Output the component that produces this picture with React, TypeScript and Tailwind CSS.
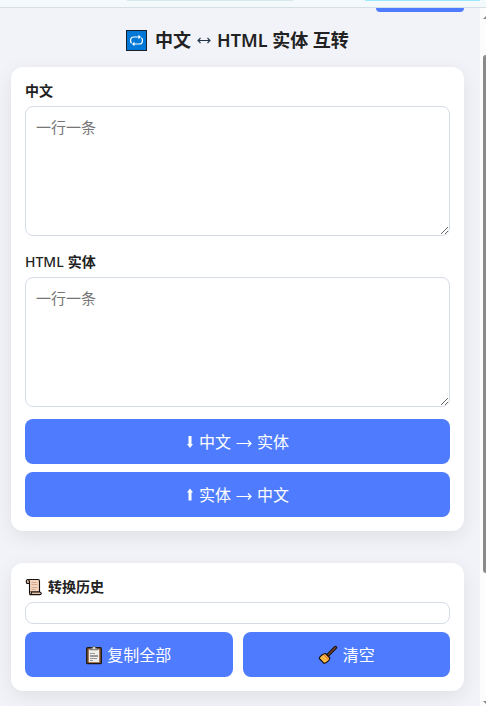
import React from "react";

const BUTTON =
  "flex h-[45px] w-full items-center justify-center gap-[5px] rounded-lg bg-[#4f7cff] text-base text-white";
const FIELD =
  "block h-[130px] w-full resize rounded-lg border border-[#d6dbe8] bg-white p-2.5 text-[15px] leading-5 placeholder:text-[#757575]";
const LABEL = "mb-[5px] flex h-5 items-center text-sm leading-5 font-semibold";
const CARD =
  "rounded-xl bg-white p-3.5 shadow-[0_6px_20px_rgba(0,0,0,0.08)]";

function RepeatIcon() {
  return (
    <svg className="h-[21px] w-[21px]" viewBox="0 0 21 21" aria-hidden="true">
      <rect width="21" height="21" fill="#16202a" />
      <rect x="1" y="1" width="19" height="19" fill="#0078d7" />
      <g fill="none" stroke="#fff" strokeWidth="1.2">
        <path d="M5.600 13.200C3.800 11.500 4.200 7 7.500 7h6" />
        <path d="M15.400 7.800C17.200 9.500 16.800 14 13.500 14h-6" />
      </g>
      <path d="M12.500 4.800 15 7l-2.500 2.200ZM8.500 11.800 6 14l2.500 2.200Z" fill="#fff" />
    </svg>
  );
}

function SwapArrow() {
  return (
    <svg className="h-[18px] w-[14px]" viewBox="0 0 14 18" fill="none" stroke="#1f3448" strokeWidth="1.100" aria-hidden="true">
      <path d="M1 9.500h12M3.500 7l-2.500 2.500 2.500 2.500M10.500 7l2.500 2.500-2.500 2.500" />
    </svg>
  );
}

function BlockArrow({ up = false }: { up?: boolean }) {
  return (
    <svg className="h-4 w-2" viewBox="0 0 8 16" fill="#fff" aria-hidden="true">
      {up ? (
        <path d="M4 1.500 7 5.500H5.500v8h-3v-8H1Z" />
      ) : (
        <path d="M4 14 7 10H5.500V2h-3v8H1Z" />
      )}
    </svg>
  );
}

function RightArrow() {
  return (
    <svg className="h-4 w-4" viewBox="0 0 16 16" fill="none" stroke="#fff" strokeWidth="1.200" aria-hidden="true">
      <path d="M0.500 9.500h14.500M12 6.500l3 3-3 3" />
    </svg>
  );
}

function ScrollIcon() {
  return (
    <svg className="h-[18px] w-[18px]" viewBox="0 0 18 18" aria-hidden="true">
      <g stroke="#17120f" strokeWidth="1.100" strokeLinejoin="round">
        <path d="M3 1.500H13c1 0 1.500.7 1.500 1.700V14H4.500V6z" fill="#f5d5bf" />
        <path d="M4.500 5.500H2.500C.9 5.500.9 1.500 2.500 1.500s2 1.300 2 3z" fill="#d9b59e" />
        <path d="M14.500 14H6.500v1c0 1-.6 1.600-1.500 1.600h10c1.700 0 1.700-2.600-.5-2.600Z" fill="#e6bfa7" />
        <path d="M4.500 13v2.300c0 1.700 2 1.700 2 0" fill="#d9b59e" />
      </g>
      <path d="M6.500 4.500h5M6.500 6.500h6M6.500 9.500h6M6.500 11.500h4" stroke="#d6ab92" />
    </svg>
  );
}

function ClipboardIcon() {
  return (
    <svg className="h-5 w-4" viewBox="0 0 16 20" aria-hidden="true">
      <rect x="0.700" y="2.700" width="14.600" height="16" rx="1" fill="#8f5a32" stroke="#1b1714" strokeWidth="1.300" />
      <path d="M2.800 4.500h10.400v12.700H2.800Z" fill="#f1efec" />
      <path d="M4.500 4.800V3.200h2C6.500.7 9.500.7 9.500 3.200h2v1.600Z" fill="#d7d7d7" stroke="#5b5550" strokeWidth="0.800" />
      <path d="M4 8.500h5M4 15.500h3M4 13.500h7" stroke="#999" />
      <path d="M4 11h8" stroke="#999" strokeWidth="2" />
    </svg>
  );
}

function BroomIcon() {
  return (
    <svg className="h-5 w-5" viewBox="0 0 20 20" aria-hidden="true">
      <path d="m9.500 10.500 8-8" stroke="#16110e" strokeWidth="3.400" strokeLinecap="round" />
      <path d="m9.500 10.500 8-8" stroke="#7b431f" strokeWidth="1.400" strokeLinecap="round" />
      <path d="m7.400 8.500 4.500 4.500c-.2 2-3.400 5.300-5.900 5.300L1.300 13.500c0-2 4.200-5 6.100-5Z" fill="#ffc04b" stroke="#16110e" strokeWidth="1.200" strokeLinejoin="round" />
      <path d="m5.800 9.800 4.700 4.700" stroke="#ef7939" strokeWidth="1.200" />
      <path d="m4 12 3.800 3.800" stroke="#e99735" strokeWidth="0.700" />
    </svg>
  );
}

export default function App() {
  return (
    <div className="flex min-h-screen flex-col overflow-hidden bg-[#f2f3f8] font-['Noto_Sans','Noto_Sans_CJK_SC',sans-serif] text-[#222]">
      <header className="flex h-2 items-start border-b border-[#d5dfe4] bg-[#f4fafc] pr-1.5 pl-[127px]">
        <div className="h-px w-[166px] bg-[#d5e8ec]" />
        <div className="ml-auto h-px w-[115px] bg-[#9ceaff]" />
      </header>

      <div className="flex flex-1">
        <main className="min-w-0 flex-1 pr-4 pb-[15px] pl-[11px]">
          <div className="flex h-[59px] flex-col">
            <button type="button" aria-label="返回" className="h-1 w-[88px] self-end rounded-b-lg bg-[#4f7cff]" />
            <h1 className="mt-3.5 flex h-7 items-center justify-center text-lg leading-7 font-semibold">
              <RepeatIcon />
              <span className="ml-2">中文</span>
              <span className="mx-1.5">
                <SwapArrow />
              </span>
              <span>HTML 实体 互转</span>
            </h1>
          </div>

          <section className={CARD}>
            <label htmlFor="chinese" className={LABEL}>中文</label>
            <textarea id="chinese" placeholder="一行一条" className={FIELD} />
            <label htmlFor="entities" className={`${LABEL} mt-4 gap-1`}>
              <span className="font-medium">HTML</span>
              <span>实体</span>
            </label>
            <textarea id="entities" placeholder="一行一条" className={FIELD} />
            <div className="mt-3 flex flex-col gap-2">
              <button type="button" className={BUTTON}>
                <BlockArrow />
                <span>中文</span>
                <RightArrow />
                <span>实体</span>
              </button>
              <button type="button" className={BUTTON}>
                <BlockArrow up />
                <span>实体</span>
                <RightArrow />
                <span>中文</span>
              </button>
            </div>
          </section>

          <section className={`${CARD} mt-8`}>
            <h2 className={`${LABEL} gap-[5px]`}>
              <ScrollIcon />
              <span>转换历史</span>
            </h2>
            <div className="h-[22px] rounded-lg border border-[#d6dbe8]" />
            <div className="mt-2 grid grid-cols-2 gap-2.5">
              <button type="button" className={BUTTON}>
                <ClipboardIcon />
                <span>复制全部</span>
              </button>
              <button type="button" className={BUTTON}>
                <BroomIcon />
                <span>清空</span>
              </button>
            </div>
          </section>
        </main>

        <div className="flex w-1.5 flex-col items-end justify-between bg-[#fcfcfc]" aria-hidden="true">
          <div className="flex flex-col items-end">
            <svg className="mt-2 h-[3px] w-[3px]" viewBox="0 0 3 3" fill="#858585">
              <path d="M0 3 3 0v3Z" />
            </svg>
            <div className="mt-9 h-[518px] w-[3px] rounded-l-sm bg-[#8b8b8b]" />
          </div>
          <svg className="mb-0.5 h-[3px] w-[3px]" viewBox="0 0 3 3" fill="#858585">
            <path d="M0 0h3v3Z" />
          </svg>
        </div>
      </div>
    </div>
  );
}
